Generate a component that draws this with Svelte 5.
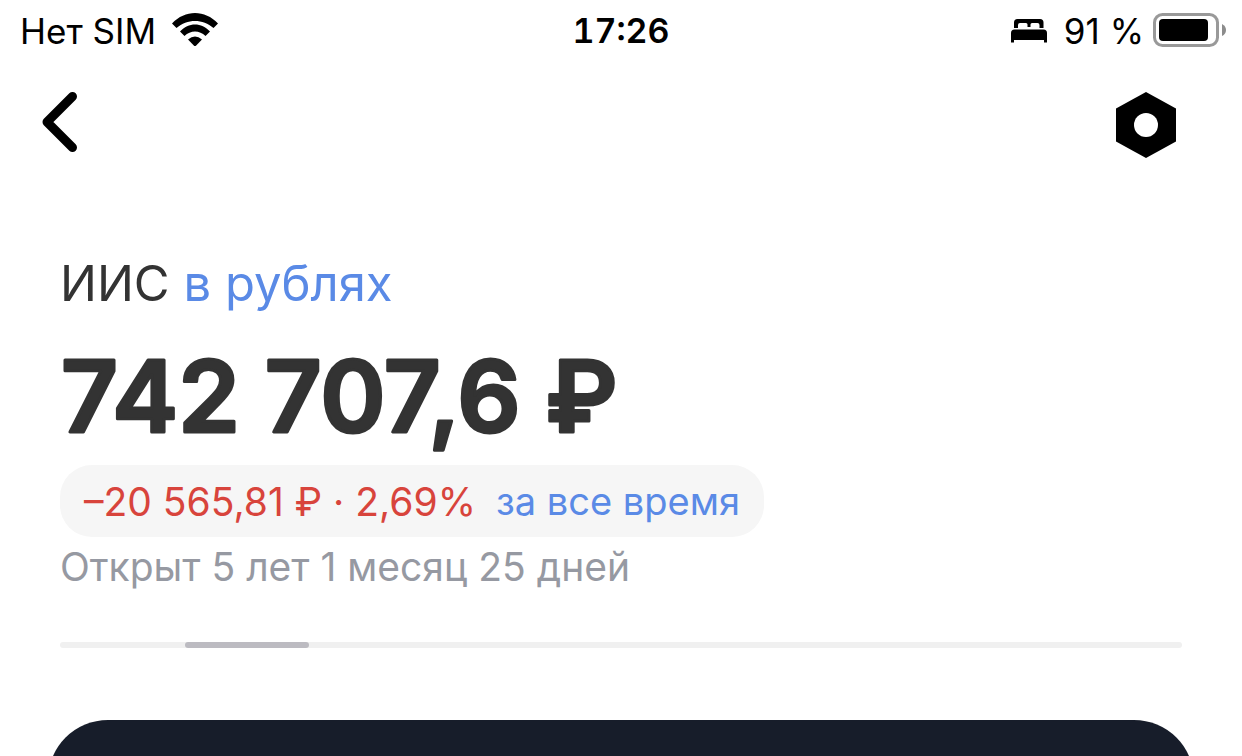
<script>
	let account = { name: 'ИИС', currency: 'в рублях' };
	let balance = '742 707,6 ₽';
	let change = '–20 565,81 ₽ · 2,69%';
	let period = 'за все время';
	let age = 'Открыт 5 лет 1 месяц 25 дней';

	// the scroller is split in nine equal parts, the second one is active
	const pages = 9;
	let page = 1;
</script>

<div class="screen">
	<div class="status">
		<div class="carrier">
			<span>Нет SIM</span>
			<svg class="wifi" width="46" height="34" viewBox="0 0 46 34" aria-hidden="true">
				<path d="M0 10.5C13 -3.5 33 -3.5 46 10.5L41.5 15C31 5.500 15 5.500 4.500 15Z" />
				<path d="M8 18.500C16.500 9 29.500 9 38 18.500L33.500 23C27.500 17 18.500 17 12.500 23Z" />
				<path d="M16 26.500Q23 20.500 30 26.500L24.200 32.400Q23 33.400 21.800 32.400Z" />
			</svg>
		</div>
		<span class="time">17:26</span>
		<div class="power">
			<svg class="bed" width="36" height="26" viewBox="0 0 36 26" aria-hidden="true">
				<path d="M3 10V4.500Q3 1 6.500 1H29Q32.500 1 32.500 4.500V10H28.500V7Q28.500 5 26.500 5H21Q19.500 5 19.500 6.500V9H16.500V6.500Q16.500 5 15 5H9Q7 5 7 7V10Z" />
				<path d="M3.500 11.500H32.500Q36 11.500 36 15V24.500H33V22H3V24.500H0V15Q0 11.500 3.500 11.500Z" />
			</svg>
			<span>91 %</span>
			<svg class="battery" width="74" height="34" viewBox="0 0 74 34" aria-hidden="true">
				<rect x="1.500" y="1.500" width="63" height="31" rx="8" fill="none" stroke="#999" stroke-width="3" />
				<rect x="6" y="6" width="49" height="22" rx="4" />
				<path d="M69 11Q73 13 73 17Q73 21 69 23Z" fill="#8c8c8c" />
			</svg>
		</div>
	</div>

	<nav>
		<button aria-label="Назад">
			<svg width="36" height="60" viewBox="0 0 36 60">
				<path
					d="M30.500 4.500L5 30L30.500 55.500"
					fill="none"
					stroke="#000"
					stroke-width="9"
					stroke-linecap="round"
					stroke-linejoin="round"
				/>
			</svg>
		</button>
		<button aria-label="Настройки">
			<svg width="60" height="66" viewBox="0 0 60 66">
				<path d="M30 0L60 16.500V49.500L30 66L0 49.500V16.500Z" />
				<circle cx="30" cy="33" r="12" fill="#fff" />
			</svg>
		</button>
	</nav>

	<main>
		<h1>{account.name} <a href="#currency">{account.currency}</a></h1>
		<!-- svg text, so that the outline can round the corners of the digits -->
		<svg class="balance">
			<text x="1" y="112">{balance}</text>
		</svg>
		<button class="pill">
			<span class="loss">{change}</span>
			<span>{period}</span>
		</button>
		<p class="age">{age}</p>
		<div class="track">
			<div
				class="thumb"
				style="width: {100 / pages}%; margin-left: {(100 / pages) * page}%"
			></div>
		</div>
	</main>

	<section class="card"></section>
</div>

<style>
	.screen {
		display: flex;
		flex-direction: column;
		height: 100vh;
		overflow: hidden;
		background: #fff;
		font-family: Inter, 'Liberation Sans', sans-serif;
		color: #333;
	}
	.screen > * {
		flex-shrink: 0;
	}
	svg {
		display: block;
	}
	button {
		padding: 0;
		border: none;
		background: none;
		font: inherit;
		cursor: pointer;
	}

	.status {
		display: grid;
		grid-template-columns: 1fr auto 1fr;
		align-items: center;
		height: 62px;
		padding: 0 15px;
		font-size: 35px;
		line-height: 40px;
		color: #000;
	}
	.carrier,
	.power {
		display: flex;
		align-items: center;
		gap: 16px;
	}
	.carrier {
		padding-left: 5px;
	}
	.power {
		justify-content: flex-end;
		gap: 9px;
	}
	.wifi,
	.battery {
		margin-bottom: 2px;
	}
	.bed {
		margin-right: 8px;
	}
	.time {
		font-size: 34px;
		font-weight: 600;
		font-variant-numeric: tabular-nums;
	}

	nav {
		display: flex;
		justify-content: space-between;
		align-items: flex-start;
		height: 92px;
		padding: 30px 66px 0 42px;
	}

	main {
		display: flex;
		flex-direction: column;
		align-items: flex-start;
		padding: 64px 60px 72px;
	}
	h1,
	p {
		margin: 0;
	}
	h1 {
		font-size: 49px;
		font-weight: 400;
		line-height: 72px;
	}
	a {
		color: #5a8ae6;
		text-decoration: none;
	}
	.balance {
		width: 100%;
		height: 145px;
		font-size: 99px;
		font-weight: 600;
		fill: #333;
		stroke: #333;
		stroke-width: 3px;
		stroke-linejoin: round;
		overflow: visible;
	}
	.pill {
		display: flex;
		align-items: center;
		gap: 20px;
		height: 72px;
		padding: 0 24px;
		border-radius: 32px;
		background: #f6f6f6;
		font-size: 38px;
		color: #5a8ae6;
		white-space: nowrap;
	}
	.loss {
		font-size: 39px;
		color: #d8443c;
	}
	.age {
		font-size: 39px;
		line-height: 60px;
		color: #9699a2;
	}
	.track {
		align-self: stretch;
		height: 6px;
		margin-top: 45px;
		border-radius: 3px;
		background: #f0f0f0;
	}
	.thumb {
		height: 6px;
		border-radius: 3px;
		background: #bcbbc1;
	}

	.card {
		height: 240px;
		margin: 0 48px;
		border-radius: 60px;
		background: #171d2a;
	}
</style>
